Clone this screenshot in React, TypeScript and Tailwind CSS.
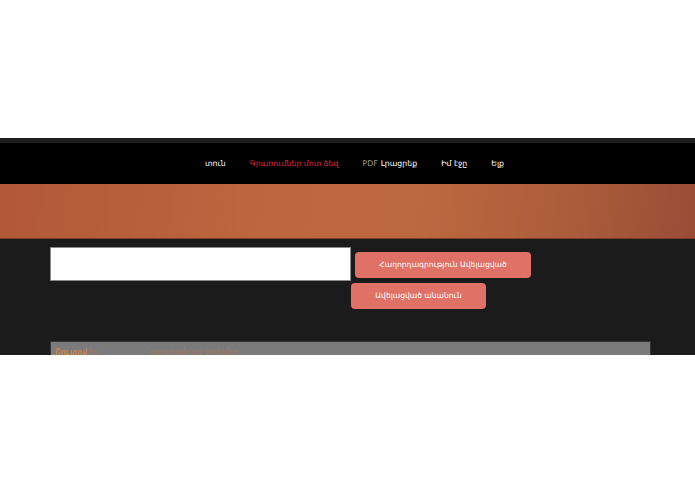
const navItems = [
  { label: 'տուն', active: false },
  { label: 'Գրառումներ մոտ ձեզ', active: true },
  { label: 'PDF', extra: 'Լրացրեք', active: false },
  { label: 'Իմ էջը', active: false },
  { label: 'Ելք', active: false },
];

export default function App() {
  return (
    <div className="min-h-[494px] w-full bg-white font-['DejaVu_Sans','Noto_Sans',sans-serif]">
      <div className="h-[138px]" />
      <div className="h-[5px] bg-[#1e1e1e]" />
      <nav className="flex h-[41px] items-center justify-center gap-[24px] bg-black pl-[14px] text-[7.8px] text-white">
        {navItems.map((item) => (
          <a
            key={item.label}
            className={item.active ? 'text-[#e0213f]' : item.extra ? 'text-[#9a9a9a]' : 'text-white'}
          >
            {item.label}
            {item.extra && <span className="ml-[3px] text-white">{item.extra}</span>}
          </a>
        ))}
      </nav>
      <div className="h-[55px] border-b border-[#7a3d28] bg-[linear-gradient(100deg,#b25837_0%,#bd6740_40%,#bd693f_60%,#a85a3a_85%,#9a4d35_100%)]" />
      <main className="h-[116px] overflow-hidden bg-[#1b1b1b] px-[50px] pt-[8px]">
        <div className="flex items-start">
          <input className="h-[34px] w-[301px] border border-[#8a8a8a] bg-white outline-none" />
          <div className="flex flex-col">
            <button className="ml-[4px] mt-[5px] h-[26px] w-[176px] rounded-[4px] bg-[#e07166] text-[7.6px] text-white">
              Հաղորդագրություն Ավելացված
            </button>
            <button className="mt-[5px] h-[26px] w-[135px] rounded-[4px] bg-[#e07166] text-[7.6px] text-white">
              Ավելացված անանուն
            </button>
          </div>
        </div>
        <div className="mt-[32px] h-[40px] w-[601px] border border-[#333] bg-[#7b7b7b] px-[4px] pt-[5px] text-[8px]">
          <span className="font-bold text-[#c8834e]">Շուտով</span>
          <span className="ml-[2px] text-[#a07a5e]">էջ</span>
          <span className="ml-[52px] text-[#a07a5e]">առաջանում բովանդ</span>
        </div>
      </main>
    </div>
  );
}
